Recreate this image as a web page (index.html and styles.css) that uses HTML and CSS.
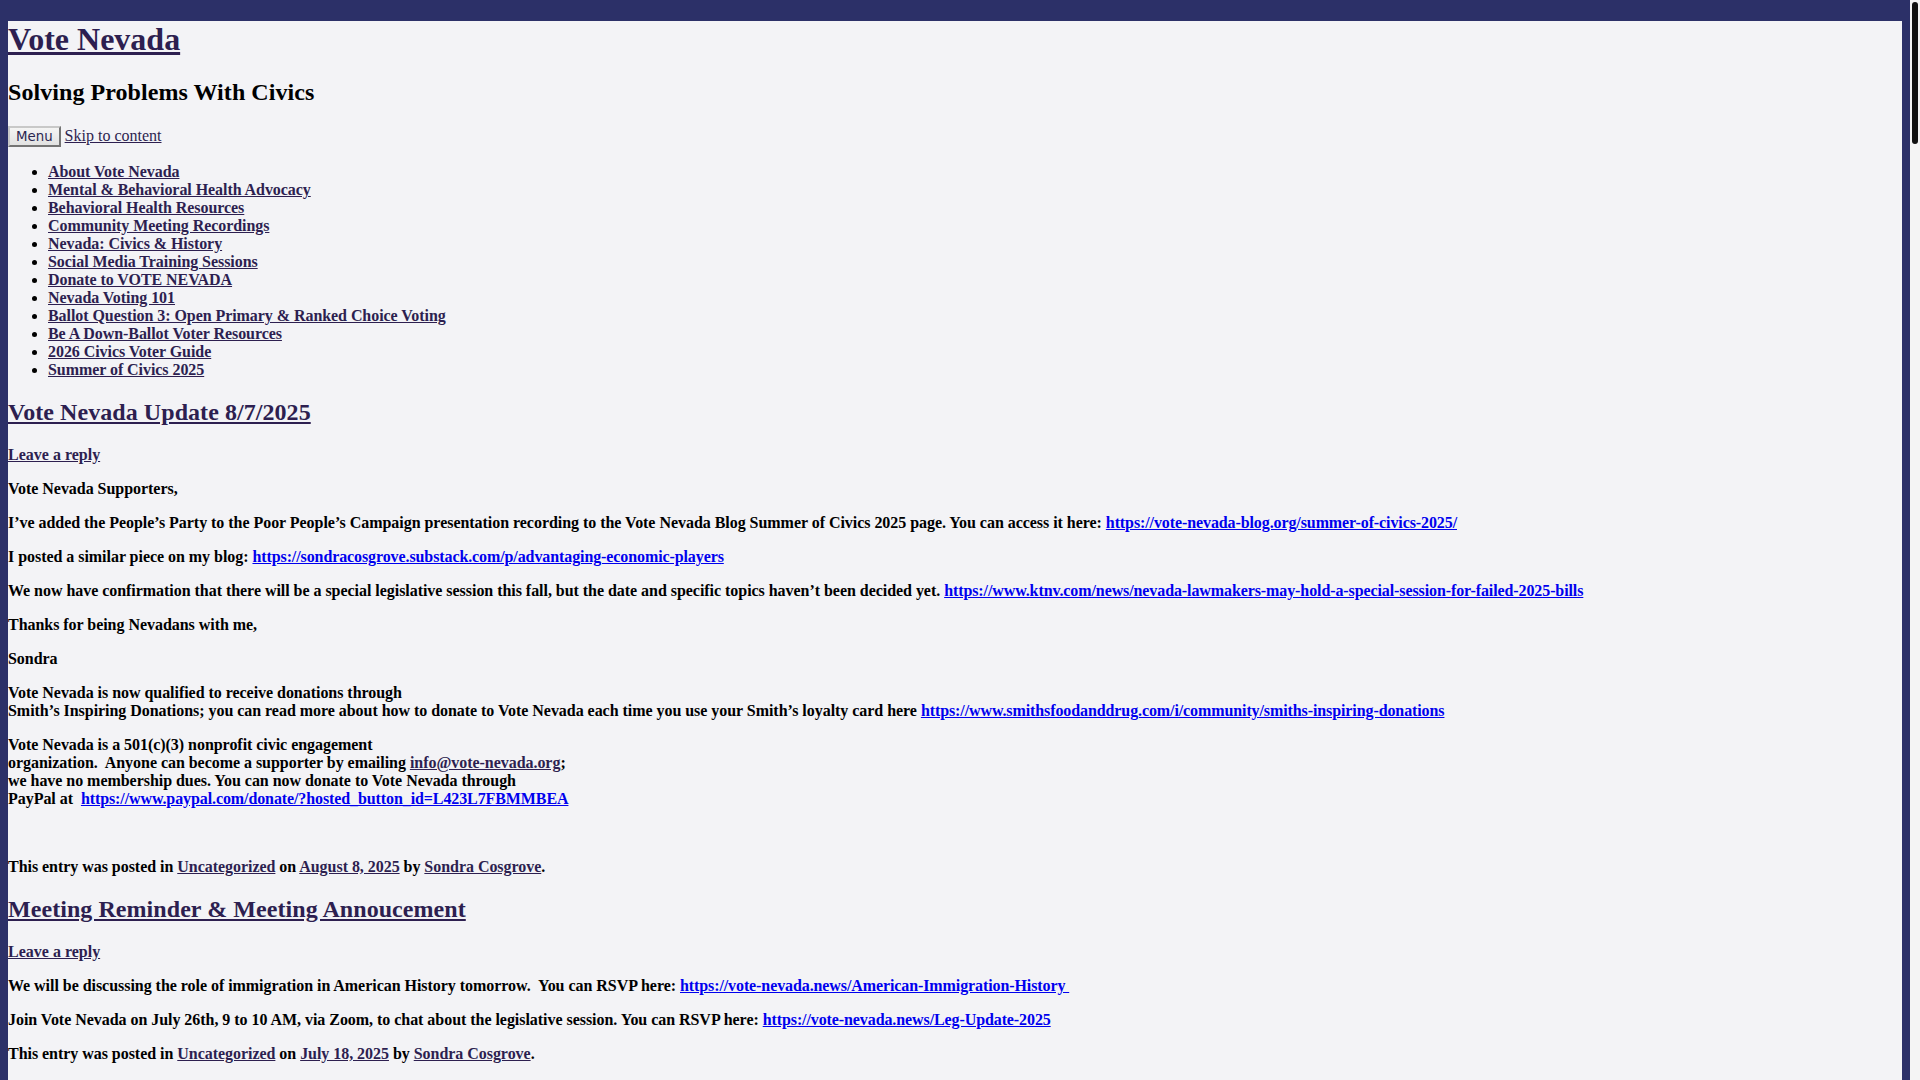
FILE: index.html
```html
<!DOCTYPE html>
<html lang="en">
<head>
    <meta charset="UTF-8">
    <meta name="viewport" content="width=device-width, initial-scale=1.0">
    <title>Vote Nevada | Solving Problems With Civics</title>
    <link rel="stylesheet" href="styles.css">
</head>
<body>
    <div id="page" class="site">
        <header class="site-header">
            <h1 class="site-title"><a href="#">Vote Nevada</a></h1>
            <h2 class="site-description">Solving Problems With Civics</h2>
            <nav class="main-navigation">
                <button class="menu-toggle">Menu</button>
                <a class="skip-link" href="#content">Skip to content</a>
                <div class="menu-main">
                    <ul class="nav-menu">
                        <li><a href="#">About Vote Nevada</a></li>
                        <li><a href="#">Mental &amp; Behavioral Health Advocacy</a></li>
                        <li><a href="#">Behavioral Health Resources</a></li>
                        <li><a href="#">Community Meeting Recordings</a></li>
                        <li><a href="#">Nevada: Civics &amp; History</a></li>
                        <li><a href="#">Social Media Training Sessions</a></li>
                        <li><a href="#">Donate to VOTE NEVADA</a></li>
                        <li><a href="#">Nevada Voting 101</a></li>
                        <li><a href="#">Ballot Question 3: Open Primary &amp; Ranked Choice Voting</a></li>
                        <li><a href="#">Be A Down-Ballot Voter Resources</a></li>
                        <li><a href="#">2026 Civics Voter Guide</a></li>
                        <li><a href="#">Summer of Civics 2025</a></li>
                    </ul>
                </div>
            </nav>
        </header>

        <main id="content" class="site-content">
            <article class="post">
                <header class="entry-header">
                    <h2 class="entry-title"><a href="#">Vote Nevada Update 8/7/2025</a></h2>
                    <div class="comments-link"><a href="#">Leave a reply</a></div>
                </header>
                <div class="entry-content">
                    <p>Vote Nevada Supporters,</p>
                    <p>I’ve added the People’s Party to the Poor People’s Campaign presentation recording to the Vote Nevada Blog Summer of Civics 2025 page. You can access it here: <a class="ext" href="#">https://vote-nevada-blog.org/summer-of-civics-2025/</a></p>
                    <p>I posted a similar piece on my blog: <a class="ext" href="#">https://sondracosgrove.substack.com/p/advantaging-economic-players</a></p>
                    <p>We now have confirmation that there will be a special legislative session this fall, but the date and specific topics haven’t been decided yet. <a class="ext" href="#">https://www.ktnv.com/news/nevada-lawmakers-may-hold-a-special-session-for-failed-2025-bills</a></p>
                    <p>Thanks for being Nevadans with me,</p>
                    <p>Sondra</p>
                    <p>Vote Nevada is now qualified to receive donations through<br>Smith’s Inspiring Donations; you can read more about how to donate to Vote Nevada each time you use your Smith’s loyalty card here <a class="ext" href="#">https://www.smithsfoodanddrug.com/i/community/smiths-inspiring-donations</a></p>
                    <p>Vote Nevada is a 501(c)(3) nonprofit civic engagement<br>organization.&nbsp; Anyone can become a supporter by emailing <a href="#">info@vote-nevada.org</a>;<br>we have no membership dues. You can now donate to Vote Nevada through<br>PayPal at&nbsp; <a class="ext" href="#">https://www.paypal.com/donate/?hosted_button_id=L423L7FBMMBEA</a></p>
                    <p>&nbsp;</p>
                </div>
                <footer class="entry-meta">
                    This entry was posted in <a href="#">Uncategorized</a> on <a href="#">August 8, 2025</a> by <a href="#">Sondra Cosgrove</a>.
                </footer>
            </article>

            <article class="post">
                <header class="entry-header">
                    <h2 class="entry-title"><a href="#">Meeting Reminder &amp; Meeting Annoucement</a></h2>
                    <div class="comments-link"><a href="#">Leave a reply</a></div>
                </header>
                <div class="entry-content">
                    <p>We will be discussing the role of immigration in American History tomorrow.&nbsp; You can RSVP here: <a class="ext" href="#">https://vote-nevada.news/American-Immigration-History&nbsp;</a></p>
                    <p>Join Vote Nevada on July 26th, 9 to 10 AM, via Zoom, to chat about the legislative session. You can RSVP here: <a class="ext" href="#">https://vote-nevada.news/Leg-Update-2025</a></p>
                </div>
                <footer class="entry-meta">
                    This entry was posted in <a href="#">Uncategorized</a> on <a href="#">July 18, 2025</a> by <a href="#">Sondra Cosgrove</a>.
                </footer>
            </article>
        </main>
    </div>

    <!-- window scrollbar, as seen in the capture -->
    <div class="scrollbar" aria-hidden="true"><div class="scrollbar-thumb"></div></div>
</body>
</html>
```

FILE: styles.css
```css
body {
    background-color: #2c3068;
    color: #000;
    font-family: 'Liberation Serif', 'Times New Roman', serif;
    font-weight: bold;
    font-size: 16px;
    margin: 0;
    padding: 21px 18px 8px 8px;
}
a {
    color: #2d1f50;
}
.site {
    background-color: #f3f3f6;
    min-height: 7960px;
}
.site-title {
    font-size: 2em;
    margin: 0 0 0.67em;
}
.site-description {
    font-size: 1.5em;
    letter-spacing: 0.06px;
}
.menu-toggle {
    font-family: 'DejaVu Sans', 'Liberation Sans', sans-serif;
    font-size: 13.33px;
    font-weight: normal;
    color: #2a2650;
    background: linear-gradient(#f4f4f4, #e2e2e2);
    border: 2px outset #c8c8c8;
    padding: 1px 6px;
    margin: 0;
}
.skip-link {
    font-weight: normal;
}
.nav-menu {
    margin: 16px 0;
    padding-left: 40px;
    letter-spacing: -0.06px;
}
.entry-title {
    font-size: 1.5em;
    letter-spacing: 0.06px;
}
.entry-content,
.entry-meta {
    letter-spacing: -0.04px;
}
.entry-content a.ext {
    color: #0000ee;
    letter-spacing: -0.1px;
}
.scrollbar {
    position: fixed;
    top: 0;
    right: 0;
    width: 10px;
    height: 100vh;
    background-color: #f4f4f4;
}
.scrollbar-thumb {
    width: 6px;
    height: 142px;
    margin: 2px;
    background-color: #111;
    border-radius: 3px;
}
```
